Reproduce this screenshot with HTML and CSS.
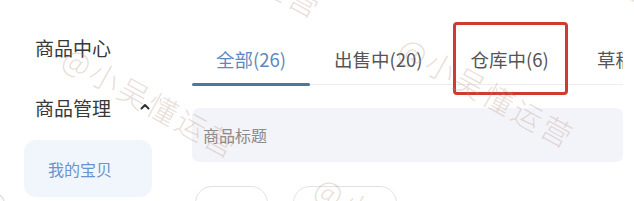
FILE: index.html
```html
<!DOCTYPE html>
<html lang="zh-CN">
<head>
<meta charset="utf-8">
<title>商品管理</title>
<link rel="stylesheet" href="styles.css">
</head>
<body>
<div class="page">
  <aside class="sidebar">
    <div class="side-title">商品中心</div>
    <div class="side-group">
      <span>商品管理</span>
      <svg class="caret" width="10" height="7" viewBox="0 0 10 7"><path d="M1.5 5.5 L5 2 L8.5 5.5" fill="none" stroke="#333" stroke-width="2" stroke-linecap="round" stroke-linejoin="round"/></svg>
    </div>
    <div class="side-item active">我的宝贝</div>
  </aside>
  <main class="main">
    <nav class="tabs">
      <div class="tab active">全部(26)</div>
      <div class="tab">出售中(20)</div>
      <div class="tab marked">仓库中(6)<span class="highlight"></span></div>
      <div class="tab">草稿箱(0)</div>
    </nav>
    <div class="search">商品标题</div>
    <div class="chips">
      <div class="chip chip-a"></div>
      <div class="chip chip-b"></div>
    </div>
  </main>
  <div class="watermarks">
    <span class="wm" style="left:-186px;top:-90px">@小吴懂运营</span>
    <span class="wm" style="left:150px;top:-100px">@小吴懂运营</span>
    <span class="wm" style="left:486px;top:-110px">@小吴懂运营</span>
    <span class="wm" style="left:66px;top:40px">@小吴懂运营</span>
    <span class="wm" style="left:402px;top:30px">@小吴懂运营</span>
    <span class="wm" style="left:-18px;top:180px">@小吴懂运营</span>
    <span class="wm" style="left:318px;top:170px">@小吴懂运营</span>
  </div>
</div>
</body>
</html>
```

FILE: styles.css
```css
* { box-sizing: border-box; }
html, body {
  margin: 0;
  padding: 0;
  background: #fff;
}
body {
  width: 634px;
  height: 201px;
  overflow: hidden;
  font-family: "Noto Sans CJK SC", "Noto Sans", sans-serif;
  color: #333;
}
.page {
  position: relative;
  display: flex;
  width: 634px;
  height: 201px;
  overflow: hidden;
}
.sidebar {
  width: 192px;
  flex: none;
  padding-top: 36px;
}
.side-title {
  padding-left: 35px;
  font-size: 19px;
  line-height: 24px;
  color: #383838;
}
.side-group {
  display: flex;
  align-items: center;
  margin-top: 36px;
  padding-left: 35px;
  font-size: 19px;
  line-height: 24px;
  color: #383838;
}
.caret {
  margin-left: 29px;
  margin-top: -3px;
}
.side-item {
  margin: 20px 0 0 24px;
  width: 128px;
  height: 57px;
  padding-left: 24px;
  display: flex;
  align-items: center;
  border-radius: 12px;
  font-size: 16px;
  color: #6a94cf;
  background: #f1f5fc;
}
.main {
  width: 431px;
  flex: none;
  padding-top: 34px;
  overflow: hidden;
}
.tabs {
  display: flex;
  border-bottom: 1px solid #ececec;
  white-space: nowrap;
}
.tab {
  position: relative;
  flex: none;
  height: 50px;
  line-height: 50px;
  padding: 0 24px;
  font-size: 18.5px;
  color: #555;
}
.tab.active {
  color: #5f88c0;
}
.tab.active::after {
  content: "";
  position: absolute;
  left: 0;
  right: 0;
  bottom: -2px;
  height: 3px;
  background: #4f76a3;
  border-radius: 2px;
}
.highlight {
  position: absolute;
  left: 6px;
  right: 5px;
  top: -12px;
  bottom: -11px;
  border: 3px solid #cf3a31;
  border-radius: 4px;
}
.search {
  margin-top: 23px;
  height: 54px;
  padding-left: 11px;
  display: flex;
  align-items: center;
  border-radius: 7px;
  background: #f3f4f9;
  font-size: 16px;
  color: #8a8a8a;
}
.chips {
  display: flex;
  gap: 25px;
  margin-top: 24px;
  padding-left: 3px;
}
.chip {
  height: 34px;
  border: 1px solid #e2e2e2;
  border-radius: 17px;
}
.chip-a { width: 73px; }
.chip-b { width: 104px; }
.watermarks {
  position: absolute;
  inset: 0;
  pointer-events: none;
  overflow: hidden;
}
.wm {
  position: absolute;
  white-space: nowrap;
  font-size: 30px;
  line-height: 28px;
  letter-spacing: 3px;
  font-weight: 300;
  color: rgba(190, 150, 135, 0.32);
  transform: rotate(29deg);
  transform-origin: 0 50%;
}
```
